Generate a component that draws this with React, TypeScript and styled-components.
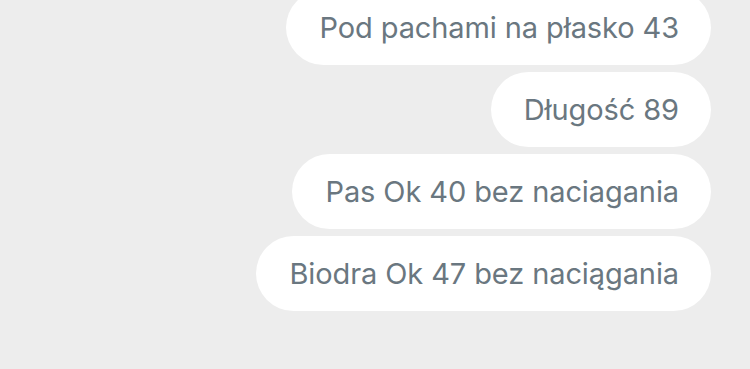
import React from "react";
import styled, { createGlobalStyle } from "styled-components";

const Global = createGlobalStyle`
  html, body { margin: 0; padding: 0; background: #ededed; overflow: hidden; }
  body { font-family: Inter, "Noto Sans", sans-serif; }
`;

const Thread = styled.div`
  width: 750px;
  height: 369px;
  box-sizing: border-box;
  padding: 0 39px 0 0;
  display: flex;
  flex-direction: column;
  align-items: flex-end;
  gap: 7px;
  overflow: hidden;
`;

const Bubble = styled.div<{ $first?: boolean }>`
  background: #ffffff;
  border-radius: 38px;
  height: 75px;
  box-sizing: border-box;
  padding: 0 32px 1px 33px;
  display: flex;
  align-items: center;
  color: #6a7780;
  font-size: 29px;
  letter-spacing: -0.1px;
  white-space: nowrap;
  margin-top: ${(p) => (p.$first ? "-10px" : "0")};
`;

const messages = [
  "Pod pachami na płasko 43",
  "Długość 89",
  "Pas Ok 40 bez naciagania",
  "Biodra Ok 47 bez naciągania",
];

export default function App() {
  return (
    <>
      <Global />
      <Thread>
        {messages.map((m, i) => (
          <Bubble key={i} $first={i === 0}>
            {m}
          </Bubble>
        ))}
      </Thread>
    </>
  );
}
